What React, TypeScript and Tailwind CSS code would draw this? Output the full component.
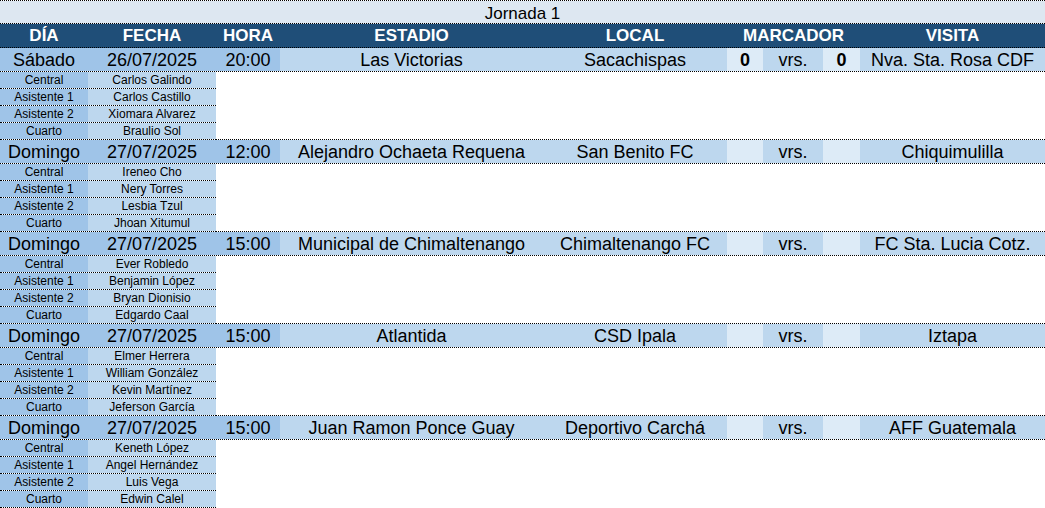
const cols = "grid grid-cols-[88px_128px_64px_263px_184px_36px_60px_37px_185px]";

const roles = ["Central", "Asistente 1", "Asistente 2", "Cuarto"];

const matches = [
  {
    day: "Sábado",
    date: "26/07/2025",
    time: "20:00",
    stadium: "Las Victorias",
    home: "Sacachispas",
    homeScore: "0",
    awayScore: "0",
    away: "Nva. Sta. Rosa CDF",
    refs: ["Carlos Galindo", "Carlos Castillo", "Xiomara Alvarez", "Braulio Sol"],
  },
  {
    day: "Domingo",
    date: "27/07/2025",
    time: "12:00",
    stadium: "Alejandro Ochaeta Requena",
    home: "San Benito FC",
    homeScore: "",
    awayScore: "",
    away: "Chiquimulilla",
    refs: ["Ireneo Cho", "Nery Torres", "Lesbia Tzul", "Jhoan Xitumul"],
  },
  {
    day: "Domingo",
    date: "27/07/2025",
    time: "15:00",
    stadium: "Municipal de Chimaltenango",
    home: "Chimaltenango FC",
    homeScore: "",
    awayScore: "",
    away: "FC Sta. Lucia Cotz.",
    refs: ["Ever Robledo", "Benjamin López", "Bryan Dionisio", "Edgardo Caal"],
  },
  {
    day: "Domingo",
    date: "27/07/2025",
    time: "15:00",
    stadium: "Atlantida",
    home: "CSD Ipala",
    homeScore: "",
    awayScore: "",
    away: "Iztapa",
    refs: ["Elmer Herrera", "William González", "Kevin Martínez", "Jeferson García"],
  },
  {
    day: "Domingo",
    date: "27/07/2025",
    time: "15:00",
    stadium: "Juan Ramon Ponce Guay",
    home: "Deportivo Carchá",
    homeScore: "",
    awayScore: "",
    away: "AFF Guatemala",
    refs: ["Keneth López", "Angel Hernández", "Luis Vega", "Edwin Calel"],
  },
];

const headers = ["DÍA", "FECHA", "HORA", "ESTADIO", "LOCAL"];

export default function App() {
  return (
    <div className="w-[1045px] h-[508px] bg-white text-black font-['Liberation_Sans',Arial,sans-serif] border-t border-dotted border-black overflow-hidden">
      {/* Title */}
      <div className="h-[23px] bg-[#dde7f1] border-b border-dotted border-black flex items-center justify-center text-[17px] leading-none pt-[2px]">
        Jornada 1
      </div>

      {/* Header */}
      <div className={`${cols} h-[24px] bg-[#1f4e78] border-b border-dotted border-black text-white font-bold text-[17px] leading-none`}>
        {headers.map((h) => (
          <div key={h} className="flex items-center justify-center">
            {h}
          </div>
        ))}
        <div className="col-span-3 flex items-center justify-center">MARCADOR</div>
        <div className="flex items-center justify-center">VISITA</div>
      </div>

      {matches.map((m, i) => (
        <div key={i}>
          <div className={`${cols} h-[24px] border-b border-dotted border-black text-[18px] leading-none`}>
            <div className="bg-[#9fc4e8] flex items-center justify-center">{m.day}</div>
            <div className="bg-[#9fc4e8] flex items-center justify-center">{m.date}</div>
            <div className="bg-[#9fc4e8] flex items-center justify-center">{m.time}</div>
            <div className="bg-[#bdd7ee] flex items-center justify-center whitespace-nowrap">{m.stadium}</div>
            <div className="bg-[#bdd7ee] flex items-center justify-center whitespace-nowrap">{m.home}</div>
            <div className="bg-[#ddebf7] flex items-center justify-center font-bold">{m.homeScore}</div>
            <div className="bg-[#bdd7ee] flex items-center justify-center">vrs.</div>
            <div className="bg-[#ddebf7] flex items-center justify-center font-bold">{m.awayScore}</div>
            <div className="bg-[#bdd7ee] flex items-center justify-center whitespace-nowrap">{m.away}</div>
          </div>
          <div className="flex">
            <div className="w-[216px] shrink-0">
              {roles.map((r, j) => (
                <div
                  key={r}
                  className="grid grid-cols-[88px_128px] h-[17px] border-b border-dotted border-black text-[12px] leading-none"
                >
                  <div className="bg-[#9fc4e8] flex items-center justify-center">{r}</div>
                  <div className="bg-[#bdd7ee] flex items-center justify-center whitespace-nowrap">{m.refs[j]}</div>
                </div>
              ))}
            </div>
            <div
              className={
                i < matches.length - 1
                  ? "flex-1 border-b border-dotted border-black"
                  : "flex-1"
              }
            />
          </div>
        </div>
      ))}
    </div>
  );
}
